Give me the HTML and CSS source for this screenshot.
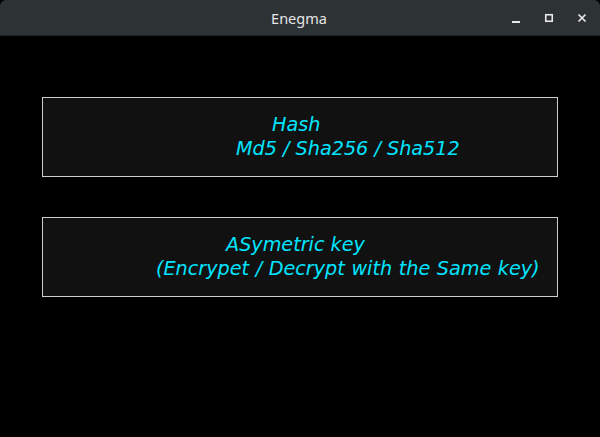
FILE: index.html
```html
<!DOCTYPE html>
<html>
<head>
<meta charset="utf-8">
<link rel="stylesheet" href="styles.css">
</head>
<body>
<div class="window">
  <header class="titlebar">
    <span class="title">Enegma</span>
    <div class="controls">
      <svg class="ctl" width="16" height="16" viewBox="0 0 16 16"><rect x="4" y="11" width="8" height="2" fill="#e8e8e8"/></svg>
      <svg class="ctl" width="16" height="16" viewBox="0 0 16 16"><rect x="4.75" y="4.75" width="6.5" height="6.5" fill="none" stroke="#e8e8e8" stroke-width="1.6"/></svg>
      <svg class="ctl" width="16" height="16" viewBox="0 0 16 16"><path d="M4.5 4.5 L11.5 11.5 M11.5 4.5 L4.5 11.5" stroke="#e8e8e8" stroke-width="1.7"/></svg>
    </div>
  </header>
  <main class="content">
    <div class="card">
      <div class="line l1">Hash</div>
      <div class="line l2">Md5 / Sha256 / Sha512</div>
    </div>
    <div class="card">
      <div class="line l3">ASymetric key</div>
      <div class="line l4">(Encrypet / Decrypt with the Same key)</div>
    </div>
  </main>
</div>
</body>
</html>
```
FILE: styles.css
```css
html, body {
  margin: 0;
  padding: 0;
  background: #000;
}
.window {
  width: 600px;
  height: 437px;
  background: #000;
  display: flex;
  flex-direction: column;
}
.titlebar {
  position: relative;
  height: 36px;
  background: #2d3235;
  border-bottom: 1px solid #1f2224;
  box-sizing: border-box;
  display: flex;
  align-items: center;
  justify-content: center;
  border-radius: 6px 6px 0 0;
}
.title {
  font-family: "Noto Sans", "Open Sans", sans-serif;
  font-size: 14.5px;
  color: #e6e6e6;
  margin-left: -2px;
}
.controls {
  position: absolute;
  right: 10px;
  top: 10px;
  display: flex;
  gap: 17px;
}
.ctl {
  display: block;
}
.content {
  display: flex;
  flex-direction: column;
  padding: 61px 42px 0 42px;
  gap: 40px;
}
.card {
  width: 516px;
  height: 80px;
  box-sizing: border-box;
  border: 1px solid #d0d0d0;
  background: #111111;
  display: flex;
  flex-direction: column;
  justify-content: center;
  font-family: "DejaVu Sans", sans-serif;
  font-style: italic;
  font-size: 19.2px;
  line-height: 24px;
  color: #00e5ff;
}
.line {
  white-space: pre;
}
.l1 { padding-left: 229px; }
.l2 { padding-left: 193px; }
.l3 { padding-left: 183px; }
.l4 { padding-left: 113px; word-spacing: 0.5px; }
```
